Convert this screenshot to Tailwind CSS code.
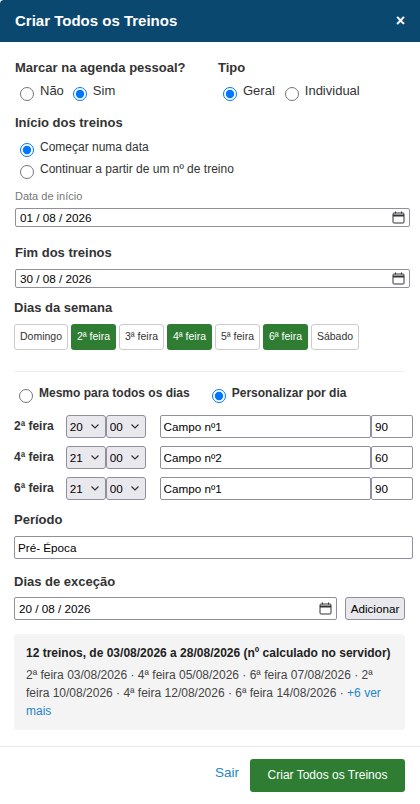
<!DOCTYPE html>
<html lang="pt">
<head>
    <meta charset="UTF-8">
    <meta name="viewport" content="width=device-width, initial-scale=1.0">
    <title>Criar Todos os Treinos</title>
    <script src="https://cdn.jsdelivr.net/npm/@tailwindcss/browser@4"></script>
</head>
<body class="bg-white font-['Liberation_Sans',Arial,sans-serif] text-[#333] w-[420px] h-[804px] overflow-hidden">
    <header class="h-[42px] bg-[#0b4870] rounded-tl-[4px] flex items-center justify-between px-[15px]">
        <h1 class="text-white font-bold text-[15px]">Criar Todos os Treinos</h1>
        <span class="text-white font-bold text-[16px] leading-none">×</span>
    </header>

    <main class="px-[15px]">
        <div class="flex pt-[17px]">
            <div class="w-[203px]">
                <p class="font-bold text-[13px] leading-[18px]">Marcar na agenda pessoal?</p>
                <div class="flex items-center h-[24px] mt-[3px] pl-[5px] text-[13px]">
                    <input type="radio" name="agenda" class="w-[14px] h-[14px] m-0 mt-[4px] accent-[#0075ff]">
                    <label class="ml-[6px] mr-[9px] -mt-[2px]">Não</label>
                    <input type="radio" name="agenda" checked class="w-[14px] h-[14px] m-0 mt-[4px] accent-[#0075ff]">
                    <label class="ml-[6px] -mt-[2px]">Sim</label>
                </div>
            </div>
            <div>
                <p class="font-bold text-[13px] leading-[18px]">Tipo</p>
                <div class="flex items-center h-[24px] mt-[3px] pl-[5px] text-[13px]">
                    <input type="radio" name="tipo" checked class="w-[14px] h-[14px] m-0 mt-[4px] accent-[#0075ff]">
                    <label class="ml-[6px] mr-[10px] -mt-[2px]">Geral</label>
                    <input type="radio" name="tipo" class="w-[14px] h-[14px] m-0 mt-[4px] accent-[#0075ff]">
                    <label class="ml-[6px] -mt-[2px]">Individual</label>
                </div>
            </div>
        </div>

        <p class="font-bold text-[13px] leading-[18px] mt-[10px]">Início dos treinos</p>
        <div class="flex items-center h-[22px] mt-[5px] pl-[5px] text-[12px]">
            <input type="radio" name="inicio" checked class="w-[14px] h-[14px] m-0 mt-[4px] accent-[#0075ff]">
            <label class="ml-[6px] -mt-[2px]">Começar numa data</label>
        </div>
        <div class="flex items-center h-[22px] pl-[5px] text-[12px]">
            <input type="radio" name="inicio" class="w-[14px] h-[14px] m-0 mt-[4px] accent-[#0075ff]">
            <label class="ml-[6px] -mt-[2px]">Continuar a partir de um nº de treino</label>
        </div>

        <p class="text-[11px] leading-[14px] text-[#777] mt-[8px]">Data de início</p>
        <div class="relative mt-[5px] w-[395px]">
            <input type="text" value="01 / 08 / 2026" class="block w-full h-[19px] border border-[#8f8fa0] rounded-[2px] pl-[4px] text-[11.7px] text-black">
            <svg class="absolute right-[5px] top-[3px] w-[13px] h-[13px]" viewBox="0 0 13 13" fill="none" stroke="#333" stroke-width="1"><rect x="1" y="2" width="11" height="10" rx="1"/><path d="M1 4.5h11" stroke-width="2"/><path d="M3.5 0.5v2M9.5 0.5v2"/></svg>
        </div>

        <p class="font-bold text-[13px] leading-[18px] mt-[17px]">Fim dos treinos</p>
        <div class="relative mt-[7px] w-[395px]">
            <input type="text" value="30 / 08 / 2026" class="block w-full h-[19px] border border-[#8f8fa0] rounded-[2px] pl-[4px] text-[11.7px] text-black">
            <svg class="absolute right-[5px] top-[3px] w-[13px] h-[13px]" viewBox="0 0 13 13" fill="none" stroke="#333" stroke-width="1"><rect x="1" y="2" width="11" height="10" rx="1"/><path d="M1 4.5h11" stroke-width="2"/><path d="M3.5 0.5v2M9.5 0.5v2"/></svg>
        </div>

        <p class="font-bold text-[13px] leading-[18px] mt-[11px] -ml-px">Dias da semana</p>
        <div class="flex gap-[3px] mt-[7px] -ml-px text-[10.5px]">
            <button class="h-[26px] w-[54px] border border-[#ccc] rounded-[3px] bg-white">Domingo</button>
            <button class="h-[26px] w-[45px] rounded-[3px] bg-[#2e7d32] text-white">2ª feira</button>
            <button class="h-[26px] w-[45px] border border-[#ccc] rounded-[3px] bg-white">3ª feira</button>
            <button class="h-[26px] w-[45px] rounded-[3px] bg-[#2e7d32] text-white">4ª feira</button>
            <button class="h-[26px] w-[45px] border border-[#ccc] rounded-[3px] bg-white">5ª feira</button>
            <button class="h-[26px] w-[45px] rounded-[3px] bg-[#2e7d32] text-white">6ª feira</button>
            <button class="h-[26px] w-[48px] border border-[#ccc] rounded-[3px] bg-white">Sábado</button>
        </div>

        <hr class="border-t border-[#eee] mt-[21px] -ml-px">

        <div class="flex items-center h-[22px] mt-[11px] pl-[4px] font-bold text-[12px]">
            <input type="radio" name="modo" class="w-[14px] h-[14px] m-0 mt-[4px] accent-[#0075ff]">
            <label class="ml-[6px] mr-[22px] -mt-[2px]">Mesmo para todos os dias</label>
            <input type="radio" name="modo" checked class="w-[14px] h-[14px] m-0 mt-[4px] accent-[#0075ff]">
            <label class="ml-[6px] -mt-[2px]">Personalizar por dia</label>
        </div>

        <div class="flex flex-col gap-[8px] mt-[10px] -ml-px -mr-[8px]">
            <div class="flex items-center">
                <span class="w-[52px] font-bold text-[12px] -mt-[2px]">2ª feira</span>
                <div class="relative w-[40px] h-[23px]">
                    <select class="appearance-none block w-full h-full bg-[#e9e9ed] border border-[#8f8fa0] rounded-[3px] pl-[3px] text-[11.7px] text-black"><option>20</option></select>
                    <svg class="absolute right-[7px] top-[9px] w-[8px] h-[5px] pointer-events-none" viewBox="0 0 8 5" fill="none" stroke="#333" stroke-width="1.2"><path d="M0.5 0.5L4 4L7.5 0.5"/></svg>
                </div>
                <div class="relative w-[40px] h-[23px]">
                    <select class="appearance-none block w-full h-full bg-[#e9e9ed] border border-[#8f8fa0] rounded-[3px] pl-[3px] text-[11.7px] text-black"><option>00</option></select>
                    <svg class="absolute right-[7px] top-[9px] w-[8px] h-[5px] pointer-events-none" viewBox="0 0 8 5" fill="none" stroke="#333" stroke-width="1.2"><path d="M0.5 0.5L4 4L7.5 0.5"/></svg>
                </div>
                <input type="text" value="Campo nº1" class="block ml-[14px] w-[212px] h-[23px] border border-[#8f8fa0] rounded-[2px] pl-[3px] text-[11.7px] text-black">
                <input type="text" value="90" class="block w-[42px] h-[23px] border border-[#8f8fa0] rounded-[2px] pl-[3px] text-[11.7px] text-black">
            </div>
            <div class="flex items-center">
                <span class="w-[52px] font-bold text-[12px] -mt-[2px]">4ª feira</span>
                <div class="relative w-[40px] h-[23px]">
                    <select class="appearance-none block w-full h-full bg-[#e9e9ed] border border-[#8f8fa0] rounded-[3px] pl-[3px] text-[11.7px] text-black"><option>21</option></select>
                    <svg class="absolute right-[7px] top-[9px] w-[8px] h-[5px] pointer-events-none" viewBox="0 0 8 5" fill="none" stroke="#333" stroke-width="1.2"><path d="M0.5 0.5L4 4L7.5 0.5"/></svg>
                </div>
                <div class="relative w-[40px] h-[23px]">
                    <select class="appearance-none block w-full h-full bg-[#e9e9ed] border border-[#8f8fa0] rounded-[3px] pl-[3px] text-[11.7px] text-black"><option>00</option></select>
                    <svg class="absolute right-[7px] top-[9px] w-[8px] h-[5px] pointer-events-none" viewBox="0 0 8 5" fill="none" stroke="#333" stroke-width="1.2"><path d="M0.5 0.5L4 4L7.5 0.5"/></svg>
                </div>
                <input type="text" value="Campo nº2" class="block ml-[14px] w-[212px] h-[23px] border border-[#8f8fa0] rounded-[2px] pl-[3px] text-[11.7px] text-black">
                <input type="text" value="60" class="block w-[42px] h-[23px] border border-[#8f8fa0] rounded-[2px] pl-[3px] text-[11.7px] text-black">
            </div>
            <div class="flex items-center">
                <span class="w-[52px] font-bold text-[12px] -mt-[2px]">6ª feira</span>
                <div class="relative w-[40px] h-[23px]">
                    <select class="appearance-none block w-full h-full bg-[#e9e9ed] border border-[#8f8fa0] rounded-[3px] pl-[3px] text-[11.7px] text-black"><option>21</option></select>
                    <svg class="absolute right-[7px] top-[9px] w-[8px] h-[5px] pointer-events-none" viewBox="0 0 8 5" fill="none" stroke="#333" stroke-width="1.2"><path d="M0.5 0.5L4 4L7.5 0.5"/></svg>
                </div>
                <div class="relative w-[40px] h-[23px]">
                    <select class="appearance-none block w-full h-full bg-[#e9e9ed] border border-[#8f8fa0] rounded-[3px] pl-[3px] text-[11.7px] text-black"><option>00</option></select>
                    <svg class="absolute right-[7px] top-[9px] w-[8px] h-[5px] pointer-events-none" viewBox="0 0 8 5" fill="none" stroke="#333" stroke-width="1.2"><path d="M0.5 0.5L4 4L7.5 0.5"/></svg>
                </div>
                <input type="text" value="Campo nº1" class="block ml-[14px] w-[212px] h-[23px] border border-[#8f8fa0] rounded-[2px] pl-[3px] text-[11.7px] text-black">
                <input type="text" value="90" class="block w-[42px] h-[23px] border border-[#8f8fa0] rounded-[2px] pl-[3px] text-[11.7px] text-black">
            </div>
        </div>

        <p class="font-bold text-[13px] leading-[18px] mt-[11px] -ml-px">Período</p>
        <input type="text" value="Pré- Época" class="block -ml-px mt-[7px] w-[399px] h-[23px] border border-[#8f8fa0] rounded-[2px] pl-[3px] text-[11.7px] text-black">

        <p class="font-bold text-[13px] leading-[18px] mt-[14px] -ml-px">Dias de exceção</p>
        <div class="flex items-center -ml-px mt-[6px]">
            <div class="relative w-[323px]">
                <input type="text" value="20 / 08 / 2026" class="block w-full h-[23px] border border-[#8f8fa0] rounded-[2px] pl-[4px] text-[11.7px] text-black">
                <svg class="absolute right-[5px] top-[5px] w-[13px] h-[13px]" viewBox="0 0 13 13" fill="none" stroke="#333" stroke-width="1"><rect x="1" y="2" width="11" height="10" rx="1"/><path d="M1 4.5h11" stroke-width="2"/><path d="M3.5 0.5v2M9.5 0.5v2"/></svg>
            </div>
            <button class="ml-[8px] w-[60px] h-[23px] bg-[#e9e9ed] border border-[#8f8fa0] rounded-[3px] text-[11.7px] text-black">Adicionar</button>
        </div>

        <section class="-ml-px mt-[14px] w-[391px] h-[96px] bg-[#f4f4f5] rounded-[4px] px-[12px] pt-[10px]">
            <p class="font-bold text-[12px] leading-[18px] text-[#222] whitespace-nowrap">12 treinos, de 03/08/2026 a 28/08/2026 (nº calculado no servidor)</p>
            <p class="text-[12px] leading-[18px] text-[#444] mt-[4px]">2ª feira 03/08/2026 · 4ª feira 05/08/2026 · 6ª feira 07/08/2026 · 2ª feira 10/08/2026 · 4ª feira 12/08/2026 · 6ª feira 14/08/2026 · <a class="text-[#1f86c8]">+6 ver mais</a></p>
        </section>
    </main>

    <footer class="mt-[16px] border-t border-[#e8e8e8] flex items-center justify-end h-[57px] pr-[15px]">
        <a class="text-[#1f86c8] text-[13.5px] mr-[11px] mb-[4px]">Sair</a>
        <button class="w-[155px] h-[33px] rounded-[3px] bg-[#2e7d32] text-white text-[12px]">Criar Todos os Treinos</button>
    </footer>
</body>
</html>
